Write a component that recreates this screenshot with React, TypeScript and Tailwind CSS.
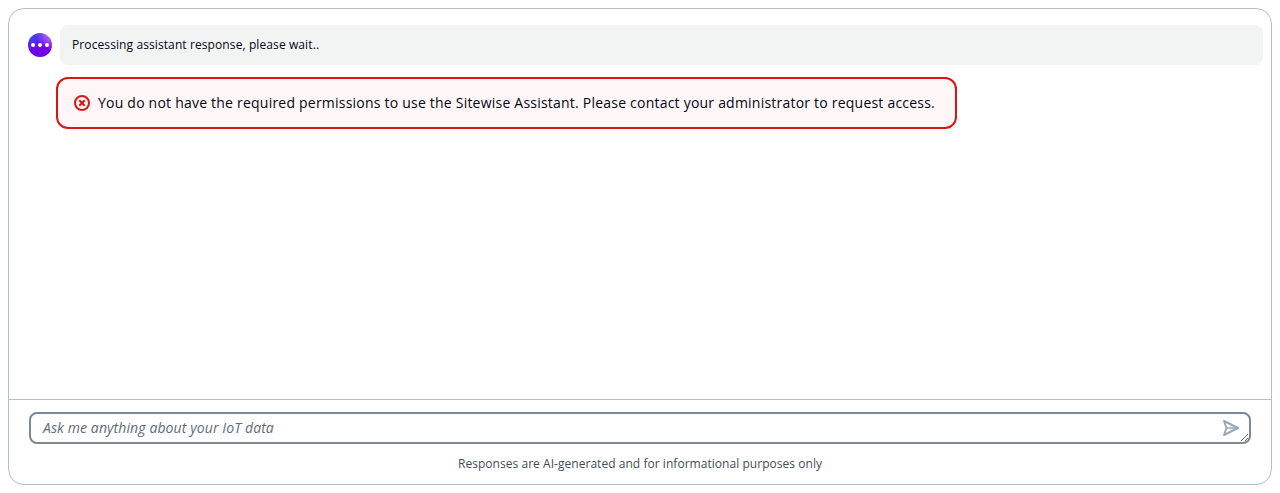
function LoadingAvatar() {
  return (
    <div className="flex h-6 w-6 shrink-0 items-center justify-center gap-[3px] rounded-full bg-[radial-gradient(circle_farthest-corner_at_top_left,rgba(0,150,250,1)_-25%,rgba(0,150,250,0)_55%),radial-gradient(circle_farthest-corner_at_top_right,rgba(216,178,255,1)_-10%,rgba(115,0,229,1)_50%)]">
      <span className="h-1 w-1 rounded-full bg-white" />
      <span className="h-1 w-1 rounded-full bg-white" />
      <span className="h-1 w-1 rounded-full bg-white" />
    </div>
  );
}

function ErrorIcon() {
  return (
    <svg className="h-4 w-4 shrink-0" viewBox="0 0 16 16" fill="none" stroke="#d91515" strokeWidth="2">
      <circle cx="8" cy="8" r="7" />
      <path d="m10.7 5.3-5.4 5.4M5.3 5.3l5.4 5.4" />
    </svg>
  );
}

function SendIcon() {
  return (
    <svg className="h-4 w-4" viewBox="0 0 16 16" fill="none" stroke="#9ba7b6" strokeWidth="2" strokeLinejoin="round">
      <path d="M1 1l2.5 7L1 15l14-7L1 1Z" />
      <path d="M3.5 8H15" strokeWidth="1.5" />
    </svg>
  );
}

export default function App() {
  return (
    <div className="h-[493px] bg-white p-2 font-['Open_Sans',sans-serif] text-[#000716]">
      <main className="flex h-[477px] flex-col rounded-2xl border border-[#b6bec9]">
        <section className="flex-1 pt-4 pr-2 pl-[19px]">
          <div className="flex items-center gap-2">
            <LoadingAvatar />
            <div className="flex h-10 flex-1 items-center rounded-lg bg-[#f2f4f3] px-3 text-xs leading-4 tracking-[0.1px]">
              Processing assistant response, please wait..
            </div>
          </div>
          <div role="alert" className="mt-3 ml-7 flex h-[52px] w-[901px] items-center gap-2 rounded-xl border-2 border-[#d91515] bg-[#fff7f7] px-4 text-sm leading-5 tracking-[0.218px] whitespace-nowrap">
            <ErrorIcon />
            You do not have the required permissions to use the Sitewise Assistant. Please contact your administrator to request access.
          </div>
        </section>
        <footer className="h-[85px] border-t border-[#b6bec9] px-5 pt-3">
          <div className="relative h-8">
            <textarea
              rows={1}
              placeholder="Ask me anything about your IoT data"
              className="block h-8 w-full overflow-hidden rounded-lg border-2 border-[#7d8998] py-1 pr-10 pl-3 text-sm leading-5 tracking-[0.1px] outline-none placeholder:text-[#5f6b7a] placeholder:italic"
            />
            <button aria-label="Send" className="absolute top-2 right-3">
              <SendIcon />
            </button>
          </div>
          <p className="mt-3 text-center text-xs leading-4 tracking-[0.04px] text-[#414d5c]">
            Responses are AI-generated and for informational purposes only
          </p>
        </footer>
      </main>
    </div>
  );
}
